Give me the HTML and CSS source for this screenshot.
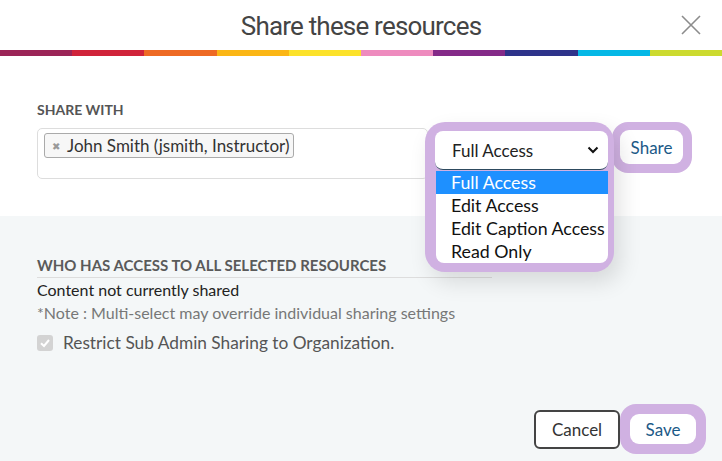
FILE: index.html
```html
<!DOCTYPE html>
<html lang="en">
<head>
<meta charset="utf-8">
<title>Share these resources</title>
<link rel="stylesheet" href="styles.css">
</head>
<body>
<div class="dialog">
  <header class="header">
    <h1 class="title">Share these resources</h1>
    <svg class="close" viewBox="0 0 20 20" width="20" height="20" aria-label="Close">
      <path d="M1 1 L19 19 M19 1 L1 19" stroke="#8c8c8c" stroke-width="1.6" fill="none"/>
    </svg>
  </header>
  <div class="stripe">
    <span class="c1"></span><span class="c2"></span><span class="c3"></span><span class="c4"></span><span class="c5"></span>
    <span class="c6"></span><span class="c7"></span><span class="c8"></span><span class="c9"></span><span class="c10"></span>
  </div>
  <section class="share-section">
    <div class="label">Share with</div>
    <div class="share-row">
      <div class="recipients">
        <span class="tag"><span class="tag-x">&#x2716;</span>John Smith (jsmith, Instructor)</span>
      </div>
      <div class="access">
        <div class="select">
          <span>Full Access</span>
          <svg class="chev" viewBox="0 0 12 8" width="12" height="8"><path d="M1.5 1.5 L6 6 L10.5 1.5" stroke="#111" stroke-width="2" fill="none"/></svg>
        </div>
        <ul class="options">
          <li class="active">Full Access</li>
          <li>Edit Access</li>
          <li>Edit Caption Access</li>
          <li>Read Only</li>
        </ul>
      </div>
      <div class="share-wrap"><button class="share-btn">Share</button></div>
    </div>
  </section>
  <section class="access-section">
    <div class="access-heading">Who has access to all selected resources</div>
    <div class="status">Content not currently shared</div>
    <div class="note">*Note : Multi-select may override individual sharing settings</div>
    <label class="check-row">
      <span class="checkbox"><svg viewBox="0 0 16 16" width="16" height="16"><path d="M4 8.2 L7 11 L12 5" stroke="#fff" stroke-width="2" fill="none"/></svg></span>
      <span>Restrict Sub Admin Sharing to Organization.</span>
    </label>
    <div class="actions">
      <button class="cancel">Cancel</button>
      <div class="save-wrap"><button class="save">Save</button></div>
    </div>
  </section>
</div>
</body>
</html>
```
FILE: styles.css
```css
body {
  margin: 0;
  background: #fff;
  font-family: Lato, "Open Sans", sans-serif;
}
.dialog {
  width: 722px;
  height: 461px;
  display: flex;
  flex-direction: column;
  overflow: hidden;
}
.header {
  height: 50px;
  display: grid;
  grid-template-columns: 1fr auto 1fr;
  align-items: center;
}
.title {
  grid-column: 2;
  margin: 0;
  font-family: Roboto, sans-serif;
  font-weight: normal;
  font-size: 26px;
  letter-spacing: -0.8px;
  color: #444;
  padding-top: 2px;
}
.close {
  grid-column: 3;
  justify-self: end;
  margin-right: 21px;
}
.stripe {
  display: flex;
  height: 6px;
}
.stripe span { flex: 1; }
.c1 { background: #9b2557; }
.c2 { background: #d0233a; }
.c3 { background: #ee6a24; }
.c4 { background: #fbb615; }
.c5 { background: #fce22a; }
.c6 { background: #ee8bbe; }
.c7 { background: #842a88; }
.c8 { background: #2e338a; }
.c9 { background: #05b8e6; }
.c10 { background: #ccda2f; }

.share-section {
  height: 160px;
  box-sizing: border-box;
  padding: 45px 0 0 37px;
}
.label {
  font-size: 14px;
  font-weight: 700;
  color: #555;
  text-transform: uppercase;
  line-height: 17px;
  margin-bottom: 10px;
}
.share-row {
  display: flex;
  align-items: flex-start;
}
.recipients {
  width: 391px;
  height: 51px;
  box-sizing: border-box;
  border: 1px solid #ddd;
  border-radius: 5px;
  padding: 4px 6px;
}
.tag {
  display: inline-flex;
  align-items: center;
  gap: 7px;
  height: 25px;
  box-sizing: border-box;
  border: 1px solid #aaa;
  border-radius: 3px;
  background: #f7f7f7;
  padding: 0 4px 0 7px;
  font-size: 17px;
  color: #333;
}
.tag-x {
  color: #999;
  font-size: 10px;
}
.access {
  position: relative;
  z-index: 2;
  margin: -6px 0 0 -3px;
  background: #d0b1e2;
  border-radius: 20px;
  padding: 9px 6px 9px 10px;
  box-shadow: 6px 10px 22px rgba(0, 0, 0, 0.12);
}
.select {
  width: 173px;
  height: 39px;
  box-sizing: border-box;
  background: #fff;
  border-radius: 8px;
  border-bottom: 1.5px solid #2d4a5e;
  display: flex;
  align-items: center;
  justify-content: space-between;
  padding: 0 9px 0 17px;
  font-size: 17px;
  color: #222;
}
.options {
  list-style: none;
  margin: 1px 0 0 1px;
  padding: 0;
  width: 172px;
  background: #fff;
  border-radius: 0 0 8px 8px;
  overflow: hidden;
}
.options li {
  height: 23px;
  line-height: 23px;
  padding-left: 15px;
  font-size: 17.8px;
  color: #111;
  white-space: nowrap;
}
.options li.active {
  background: #1e90ff;
  color: #fff;
}
.share-wrap {
  margin: -6px 0 0 -2px;
  background: #d0b1e2;
  border-radius: 16px;
  padding: 8px 9px 9px 8px;
}
.share-btn {
  display: block;
  width: 63px;
  height: 34px;
  background: #fff;
  border: 0;
  border-radius: 9px;
  font-family: inherit;
  font-size: 17px;
  color: #1b5987;
  padding: 0;
}

.access-section {
  flex: 1;
  background: #f4f7f8;
  padding: 39px 16px 7px 37px;
  display: flex;
  flex-direction: column;
  align-items: flex-start;
}
.access-heading {
  width: 455px;
  font-size: 15px;
  font-weight: 700;
  color: #5a5a5a;
  text-transform: uppercase;
  line-height: 20px;
  border-bottom: 1px solid #ddd;
  padding-bottom: 2px;
}
.status {
  font-size: 16px;
  line-height: 20px;
  color: #222;
  margin-top: 2px;
}
.note {
  font-size: 16px;
  line-height: 20px;
  color: #777;
  margin-top: 3px;
}
.check-row {
  display: flex;
  align-items: center;
  gap: 10px;
  margin-top: 9px;
  font-size: 17.3px;
  color: #555;
}
.checkbox {
  width: 16px;
  height: 16px;
  border-radius: 3px;
  background: #d3d3d3;
  display: flex;
}
.actions {
  margin-top: auto;
  align-self: stretch;
  display: flex;
  justify-content: flex-end;
  align-items: center;
}
.cancel {
  width: 86px;
  height: 39px;
  background: #fff;
  border: 2px solid #444;
  border-radius: 6px;
  font-family: inherit;
  font-size: 17px;
  color: #333;
  padding: 0;
}
.save-wrap {
  background: #d0b1e2;
  border-radius: 16px;
  padding: 10px;
}
.save {
  display: block;
  width: 66px;
  height: 30px;
  background: #fff;
  border: 0;
  border-radius: 9px;
  font-family: inherit;
  font-size: 17px;
  color: #1b5987;
  padding: 0;
}
```
